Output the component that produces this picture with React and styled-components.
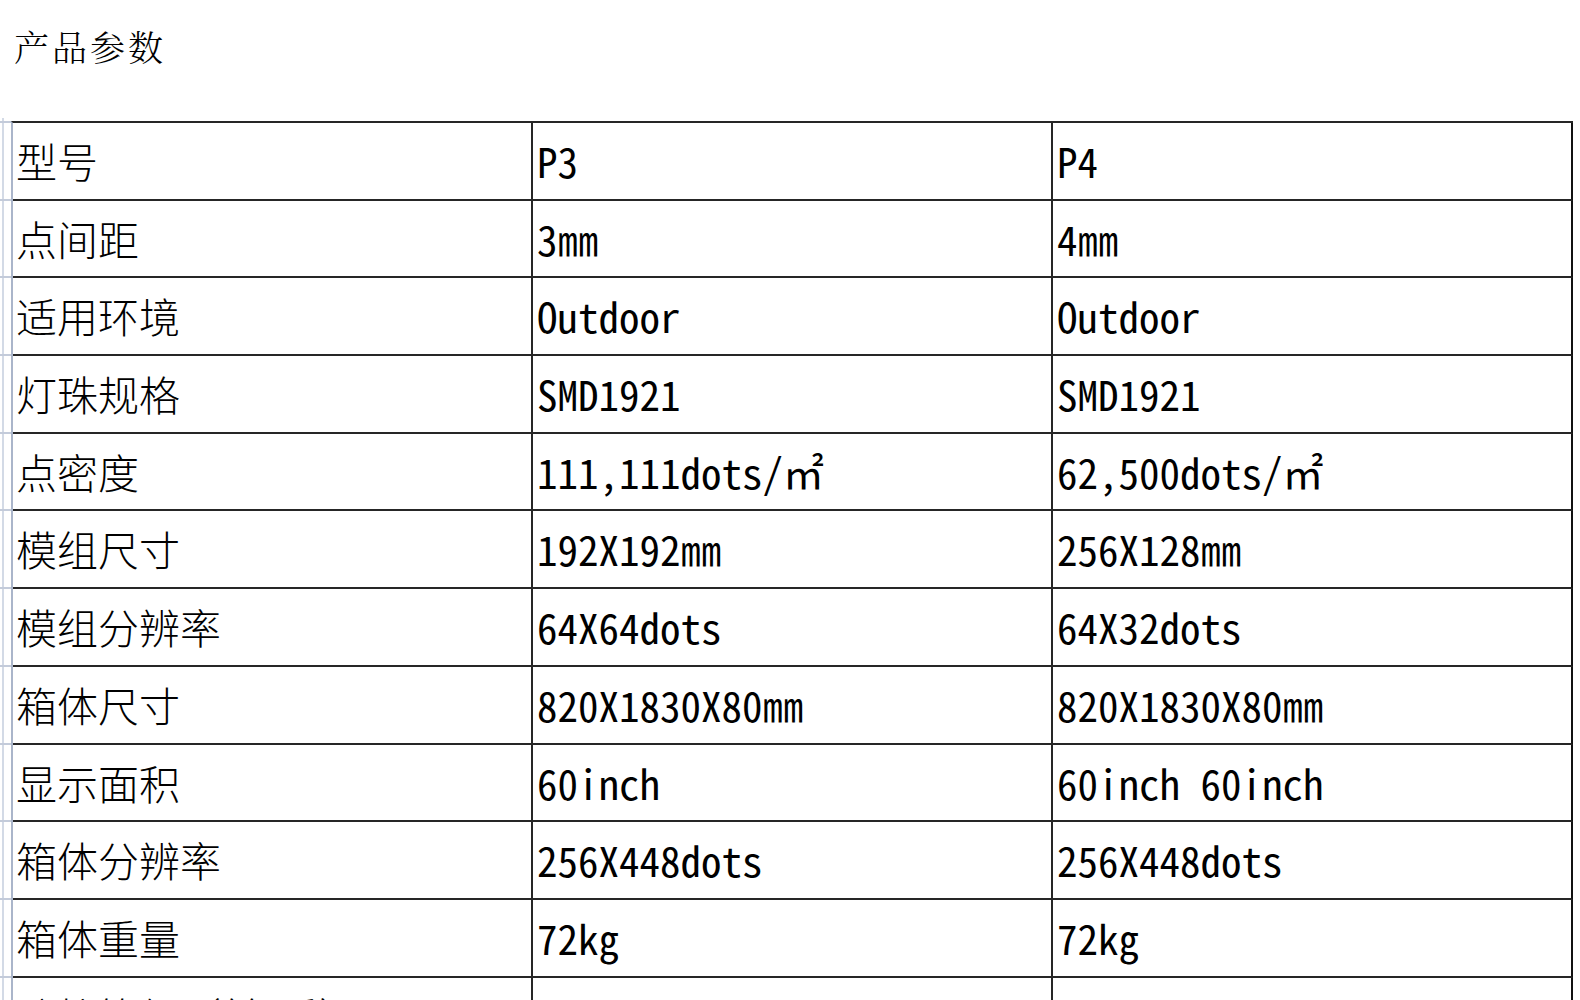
import React from "react";
import styled, { createGlobalStyle } from "styled-components";

const GlobalStyle = createGlobalStyle`
  html, body {
    margin: 0;
    padding: 0;
    background: #ffffff;
  }
  body {
    font-family: "Noto Sans CJK SC", "Noto Sans", sans-serif;
    color: #000;
  }
`;

const Page = styled.div`
  height: 100vh;
  overflow: hidden;
  background: #fff;
`;

const Title = styled.h1`
  margin: 0;
  padding: 29px 0 0 14px;
  height: 91px;
  box-sizing: border-box;
  font-family: "Noto Serif CJK SC", "Noto Sans CJK SC", serif;
  font-weight: 300;
  font-size: 35px;
  line-height: 35px;
  letter-spacing: 3px;
  color: #000;
`;

const SheetArea = styled.div`
  margin-left: 2px;
  margin-top: 27px;
  padding-left: 7px;
  border-left: 2px solid #d3dae6;
  padding-top: 3px;
  height: 1000px;
  box-sizing: border-box;
`;

const Table = styled.div`
  position: relative;
  display: grid;
  grid-template-columns: 1fr;
  width: 1562px;
  box-sizing: border-box;
  border-top: 2px solid #262626;
  border-left: 2px solid #aab5ca;

  &::before {
    content: "";
    position: absolute;
    left: -13px;
    top: -2px;
    width: 11px;
    height: 2px;
    background: #c3cbda;
  }
`;

const Row = styled.div`
  position: relative;
  display: grid;
  grid-template-columns: repeat(3, 520px);
  height: 77.7px;

  &::before {
    content: "";
    position: absolute;
    left: -13px;
    bottom: 0;
    width: 11px;
    height: 2px;
    background: #c3cbda;
  }
`;

const Cell = styled.div`
  box-sizing: border-box;
  border-right: 2px solid ${(p) => (p.$last ? "#111" : "#262626")};
  border-bottom: 2px solid #262626;
  padding: 17px 4px 0 ${(p) => (p.$label ? "3px" : "4px")};
  font-size: 41px;
  line-height: 41px;
  white-space: nowrap;
  overflow: hidden;
  color: #000;
  font-family: ${(p) =>
    p.$label
      ? `"Noto Sans CJK SC", sans-serif`
      : `"Noto Sans Mono CJK SC", "Noto Sans CJK SC", monospace`};
  font-weight: 300;
`;

const rows = [
  ["型号", "P3", "P4"],
  ["点间距", "3㎜", "4㎜"],
  ["适用环境", "Outdoor", "Outdoor"],
  ["灯珠规格", "SMD1921", "SMD1921"],
  ["点密度", "111,111dots/㎡", "62,500dots/㎡"],
  ["模组尺寸", "192X192㎜", "256X128㎜"],
  ["模组分辨率", "64X64dots", "64X32dots"],
  ["箱体尺寸", "820X1830X80㎜", "820X1830X80㎜"],
  ["显示面积", "60inch", "60inch 60inch"],
  ["箱体分辨率", "256X448dots", "256X448dots"],
  ["箱体重量", "72kg", "72kg"],
  ["防护等级（前/后）", "", ""],
];

export default function App() {
  return (
    <Page>
      <GlobalStyle />
      <Title>产品参数</Title>
      <SheetArea>
        <Table>
          {rows.map(([label, a, b]) => (
            <Row key={label}>
              <Cell $label>{label}</Cell>
              <Cell>{a}</Cell>
              <Cell $last>{b}</Cell>
            </Row>
          ))}
        </Table>
      </SheetArea>
    </Page>
  );
}
